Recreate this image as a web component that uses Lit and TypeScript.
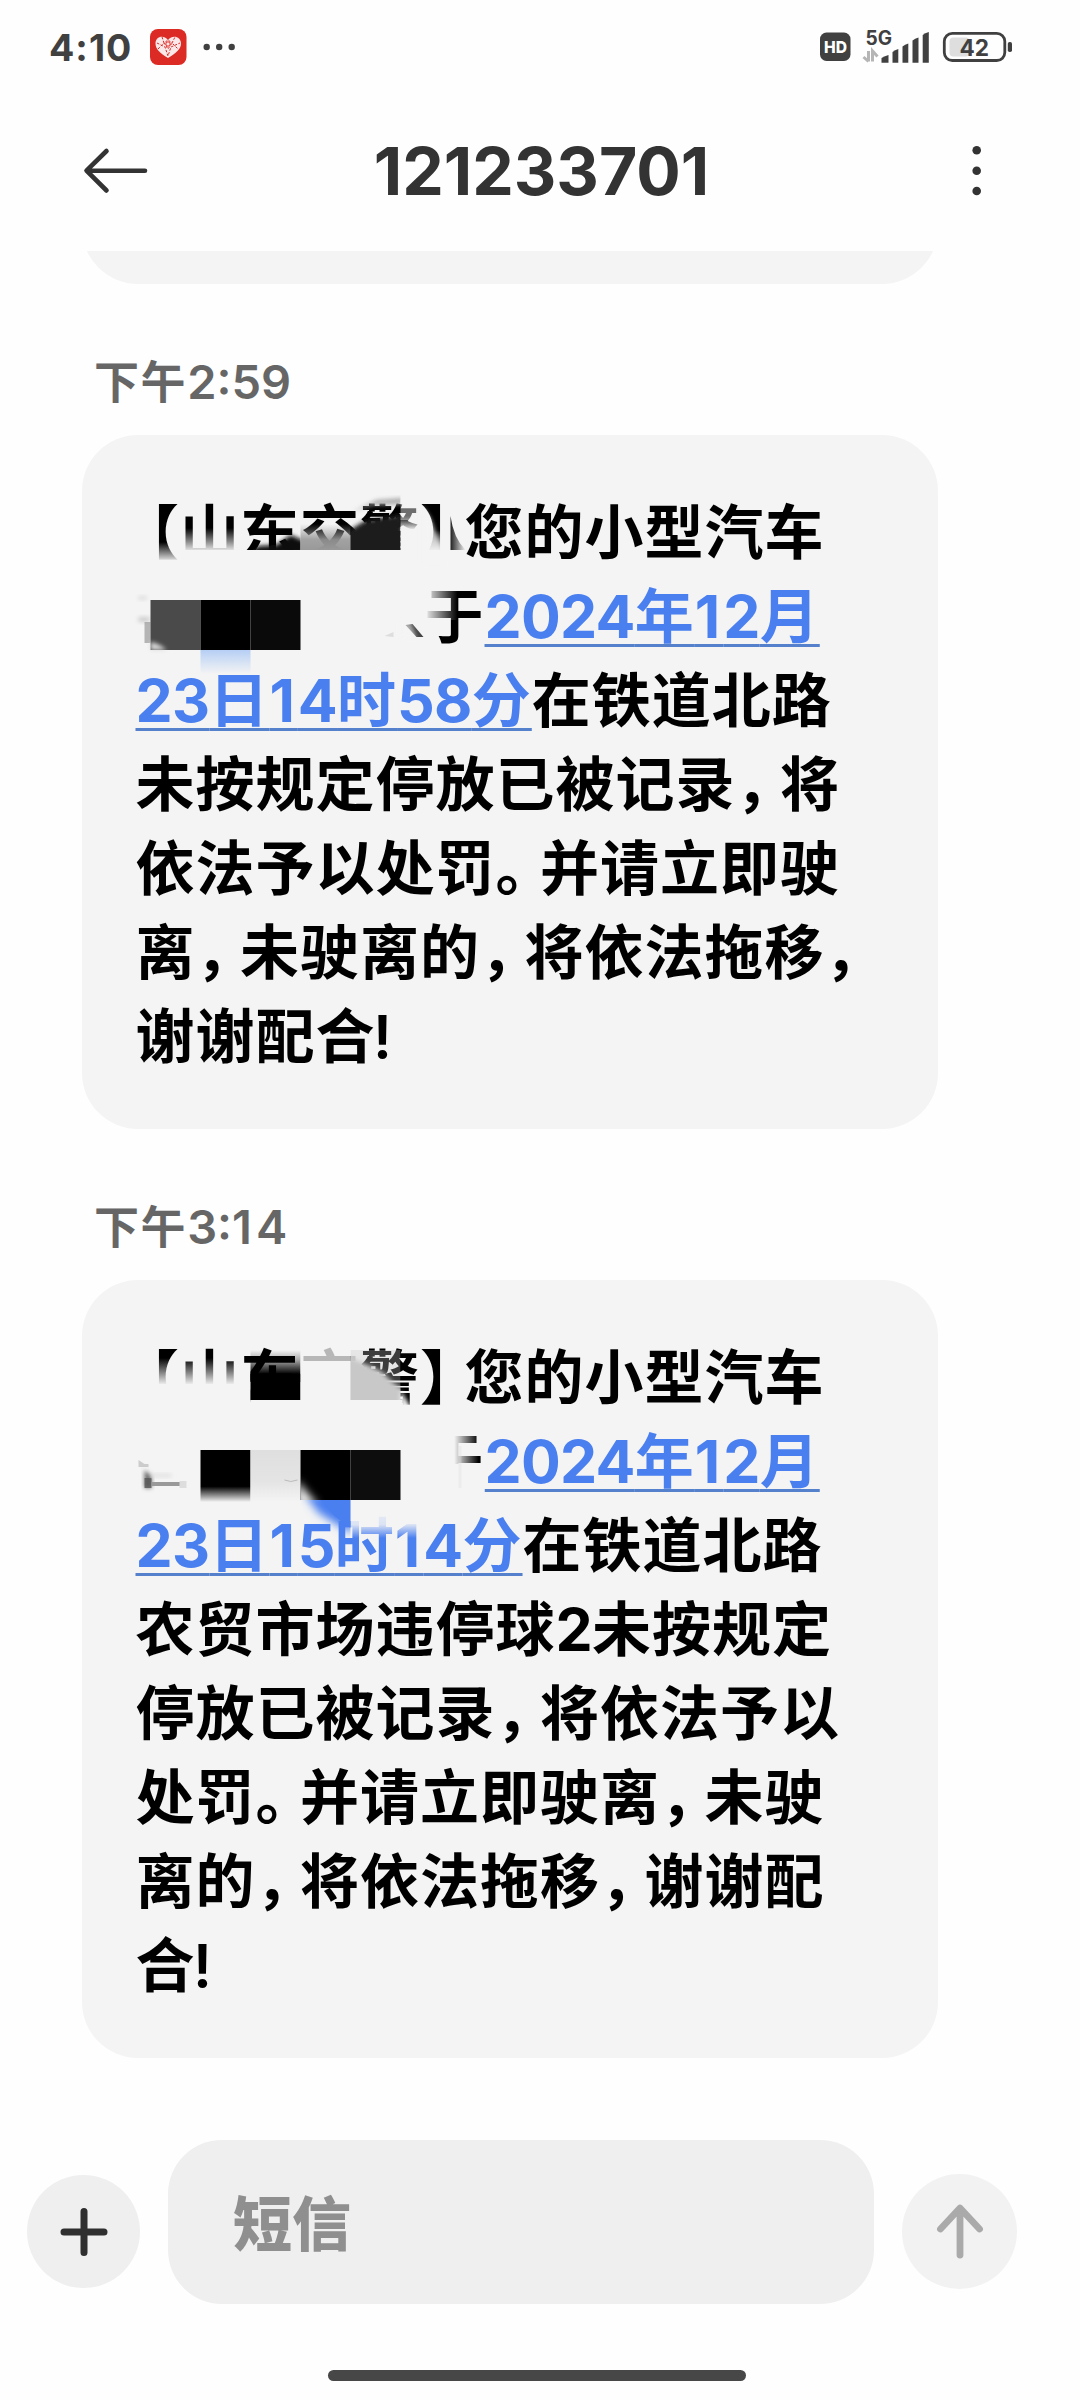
import { LitElement, html, css, svg } from "lit";
import { customElement, property } from "lit/decorators.js";

type Run = { text: string; link?: boolean; gap?: boolean };
type Message = { time: string; lines: Run[][] };

const messages: Message[] = [
  {
    time: "下午2:59",
    lines: [
      [{ text: "【山东交警】您的小型汽车" }],
      [{ text: "", gap: true }, { text: "于" }, { text: "2024年12月", link: true }],
      [{ text: "23日14时58分", link: true }, { text: "在铁道北路" }],
      [{ text: "未按规定停放已被记录，将" }],
      [{ text: "依法予以处罚。并请立即驶" }],
      [{ text: "离，未驶离的，将依法拖移，" }],
      [{ text: "谢谢配合!" }],
    ],
  },
  {
    time: "下午3:14",
    lines: [
      [{ text: "【山东交警】您的小型汽车" }],
      [{ text: "", gap: true }, { text: "于" }, { text: "2024年12月", link: true }],
      [{ text: "23日15时14分", link: true }, { text: "在铁道北路" }],
      [{ text: "农贸市场违停球2未按规定" }],
      [{ text: "停放已被记录，将依法予以" }],
      [{ text: "处罚。并请立即驶离，未驶" }],
      [{ text: "离的，将依法拖移，谢谢配" }],
      [{ text: "合!" }],
    ],
  },
];

/* Wraps punctuation and digits so that each gets its own advance. */
const pieces = (text: string) =>
  text.split(/([，。【】]|1|[02-9]+|!)/).filter(Boolean).map((p) => {
    if (p === "【") return html`<span class="open">${p}</span>`;
    if (/[，。】]/.test(p)) return html`<span class="close">${p}</span>`;
    if (p === "!") return html`<span class="bang">${p}</span>`;
    if (p === "1") return html`<span class="num one">${p}</span>`;
    if (/[0-9]/.test(p)) return html`<span class="num">${p}</span>`;
    return p;
  });

const BG = "#f4f4f4";

const firstMask = svg`
  <defs>
    <filter id="s2" x="-50%" y="-50%" width="200%" height="200%"><feGaussianBlur stdDeviation="2"/></filter>
    <linearGradient id="down" x1="0" y1="0" x2="0" y2="1"><stop offset="0" stop-color=${BG} stop-opacity="0"/><stop offset="1" stop-color=${BG}/></linearGradient>
    <linearGradient id="leftFade" x1="0" y1="0" x2="1" y2="0"><stop offset="0" stop-color=${BG}/><stop offset="1" stop-color=${BG} stop-opacity="0"/></linearGradient>
    <linearGradient id="grayDown" x1="0" y1="0" x2="0" y2="1"><stop offset="0" stop-color="#999" stop-opacity="0"/><stop offset=".6" stop-color="#999" stop-opacity=".9"/><stop offset="1" stop-color="#999"/></linearGradient>
    <linearGradient id="blueDown" x1="0" y1="0" x2="0" y2="1"><stop offset="0" stop-color="#b6cff5"/><stop offset="1" stop-color=${BG}/></linearGradient>
    <linearGradient id="shard" x1="0" y1="0" x2="1" y2="0"><stop offset="0" stop-color="#222"/><stop offset="1" stop-color=${BG}/></linearGradient>
    <clipPath id="c1"><rect x="250" y="504" width="50" height="46"/></clipPath>
    <clipPath id="c3"><rect x="350" y="495" width="50" height="55"/></clipPath>
  </defs>
  <rect x="150" y="542" width="32" height="20" fill="url(#down)"/>
  <rect x="182" y="528" width="58" height="24" fill="url(#down)"/>
  <rect x="182" y="550" width="225" height="15" fill=${BG}/>
  <g clip-path="url(#c1)"><path d="M245 554L258 546 276 545 290 535 304 541V554Z" fill="#0a0a0a" filter="url(#s2)"/></g>
  <rect x="300" y="524" width="50" height="26" fill="url(#grayDown)"/>
  <g clip-path="url(#c3)"><path d="M346 532L364 521 402 514V554H346Z" fill="#1a1a1a" filter="url(#s2)"/><rect x="350" y="532" width="50" height="18" fill="#1c1c1c"/><path d="M352 512L376 500 402 498V504L372 505Z" fill="#aaa" filter="url(#s2)"/></g>
  <rect x="400" y="500" width="21" height="20" fill=${BG} opacity=".45"/>
  <rect x="400" y="516" width="22" height="14" fill="url(#down)"/>
  <rect x="400" y="529" width="26" height="36" fill=${BG}/>
  <path d="M422 506L430 518 440 545 444 565H422Z" fill=${BG} opacity=".7" filter="url(#s2)"/>
  <rect x="424" y="530" width="22" height="22" fill="url(#down)"/>
  <rect x="424" y="550" width="22" height="15" fill=${BG}/>
  <path d="M450 516Q453 538 465 550H450Z" fill="url(#shard)"/>
  <rect x="138" y="596" width="8" height="4" fill="#ddd" filter="url(#s2)"/>
  <rect x="138" y="617" width="11" height="5" fill="#ccc" filter="url(#s2)"/>
  <path d="M144 622H150V643H144Z" fill="#999" opacity=".7"/>
  <rect x="150" y="600" width="50" height="50" fill="#4a4a4a"/>
  <path d="M150 642Q158 643 166 650H150Z" fill="#ddd" filter="url(#s2)"/>
  <rect x="200" y="600" width="50" height="50" fill="#000"/>
  <rect x="250" y="600" width="50" height="50" fill="#0a0a0a"/>
  <rect x="200" y="650" width="50" height="24" fill="url(#blueDown)"/>
  <path d="M405 625L412 624 423 637H416Z" fill="#444"/>
  <path d="M400 622L410 622 416 638H400Z" fill=${BG} opacity=".6" filter="url(#s2)"/>
  <path d="M384 636L393 632V637Z" fill="#ddd"/>
  <rect x="424" y="586" width="33" height="34" fill="url(#leftFade)"/>`;

const secondMask = svg`
  <defs>
    <filter id="t2" x="-50%" y="-50%" width="200%" height="200%"><feGaussianBlur stdDeviation="2"/></filter>
    <filter id="t4" x="-50%" y="-50%" width="200%" height="200%"><feGaussianBlur stdDeviation="4"/></filter>
    <linearGradient id="down2" x1="0" y1="0" x2="0" y2="1"><stop offset="0" stop-color=${BG} stop-opacity="0"/><stop offset="1" stop-color=${BG}/></linearGradient>
    <linearGradient id="left2" x1="0" y1="0" x2="1" y2="0"><stop offset="0" stop-color=${BG}/><stop offset=".55" stop-color=${BG}/><stop offset="1" stop-color=${BG} stop-opacity="0"/></linearGradient>
    <linearGradient id="dark2" x1="0" y1="0" x2="0" y2="1"><stop offset="0" stop-color="#000" stop-opacity="0"/><stop offset=".3" stop-color="#000" stop-opacity=".3"/><stop offset=".75" stop-color="#000"/><stop offset="1" stop-color="#000"/></linearGradient>
    <linearGradient id="block2" x1="0" y1="0" x2="0" y2="1"><stop offset="0" stop-color="#000"/><stop offset=".7" stop-color="#000"/><stop offset="1" stop-color=${BG}/></linearGradient>
    <linearGradient id="light2" x1="0" y1="0" x2="0" y2="1"><stop offset="0" stop-color="#dfdfdf"/><stop offset=".6" stop-color="#e4e4e4"/><stop offset="1" stop-color=${BG}/></linearGradient>
    <linearGradient id="veil2" x1="0" y1="0" x2="0" y2="1"><stop offset="0" stop-color=${BG}/><stop offset=".65" stop-color=${BG} stop-opacity=".85"/><stop offset="1" stop-color=${BG} stop-opacity="0"/></linearGradient>
    <clipPath id="g2"><rect x="350" y="1350" width="50" height="50"/></clipPath>
    <clipPath id="b2"><rect x="300" y="1500" width="50" height="40"/></clipPath>
    <clipPath id="k2"><rect x="300" y="1450" width="50" height="50"/></clipPath>
  </defs>
  <rect x="150" y="1358" width="91" height="27" fill="url(#down2)"/>
  <rect x="150" y="1384" width="100" height="28" fill=${BG}/>
  <rect x="240" y="1366" width="10" height="44" fill=${BG}/>
  <rect x="250" y="1350" width="50" height="32" fill="url(#dark2)"/>
  <rect x="250" y="1374" width="50" height="26" fill="#000"/>
  <rect x="250" y="1400" width="152" height="12" fill=${BG}/>
  <rect x="300" y="1347" width="50" height="14" fill=${BG} opacity=".75"/>
  <rect x="300" y="1361" width="60" height="46" fill=${BG}/>
  <rect x="350" y="1347" width="12" height="16" fill=${BG} opacity=".8"/>
  <g clip-path="url(#g2)"><rect x="350" y="1350" width="50" height="50" fill="#c8c8c8" opacity=".3"/><path d="M345 1356L370 1366 382 1372 392 1382 404 1390V1406H345Z" fill="#c8c8c8" filter="url(#t2)"/></g>
  <path d="M400 1390L406 1400 412 1410H400Z" fill=${BG} filter="url(#t2)"/>
  <path d="M138 1460L144 1464H148V1467H138Z" fill="#ccc"/>
  <path d="M144 1470L151 1476V1488H144Z" fill="#666" filter="url(#t2)"/>
  <path d="M144 1478H151V1488H144Z" fill="#555" opacity=".8"/>
  <rect x="151" y="1482" width="30" height="4" fill="#999"/>
  <rect x="151" y="1474" width="20" height="3" fill="#ddd" filter="url(#t2)"/>
  <rect x="179" y="1481" width="7" height="7" fill="#ddd"/>
  <rect x="200" y="1450" width="50" height="52" fill="url(#block2)"/>
  <rect x="250" y="1450" width="50" height="52" fill="url(#light2)"/>
  <path d="M284 1480Q290 1483 297 1480" fill="none" stroke="#bbb" stroke-width="1"/>
  <rect x="350" y="1450" width="50" height="50" fill="#0d0d0d"/>
  <rect x="300" y="1450" width="50" height="50" fill="#000"/>
  <g clip-path="url(#k2)"><path d="M296 1480L318 1506H296Z" fill=${BG} filter="url(#t4)"/></g>
  <rect x="350" y="1500" width="84" height="38" fill="url(#veil2)"/>
  <g clip-path="url(#b2)"><path d="M304 1494L318 1513 334 1523 352 1534V1494Z" fill="#4a7ff0" filter="url(#t4)"/><path d="M318 1498H350V1528L334 1516Z" fill="#4a7ff0"/></g>
  <rect x="424" y="1430" width="54" height="34" fill="url(#left2)"/>
  <rect x="424" y="1464" width="60" height="36" fill=${BG}/>
  <rect x="458" y="1446" width="3" height="42" fill="#ddd" opacity=".35"/>`;

@customElement("sms-message")
class SmsMessage extends LitElement {
  @property({ attribute: false }) message!: Message;
  @property({ type: Number }) index = 0;

  static styles = css`
    :host { display: block; }
    .time {
      height: 60px; font-size: 45px; line-height: 60px; font-weight: 600; color: #666;
      padding-left: 12.5px; letter-spacing: 1.6px; white-space: pre;
    }
    .time-num { font-size: 47px; letter-spacing: 0; }
    .time-num .one { letter-spacing: 4px; }
    .bubble {
      position: relative; box-sizing: border-box; width: 856px; margin-top: 23px;
      padding: 55.5px 0 50.5px 54px; border-radius: 56px; background: #f4f4f4;
      color: #000; font-size: 59px; line-height: 84px; font-weight: 700; letter-spacing: 1px;
      text-spacing-trim: space-all;
    }
    .line { height: 84px; white-space: nowrap; }
    .open { margin-left: -15.5px; }
    .close { letter-spacing: -14.5px; }
    .bubble .num { font-size: 59px; letter-spacing: -0.7px; }
    .bubble .one { letter-spacing: 3px; }
    .bang { margin-left: -2.5px; font-weight: 600; }
    .gap { display: inline-block; width: 289px; }
    .link {
      color: #4a7ff0; text-decoration: underline; text-decoration-color: #5580cc;
      text-decoration-thickness: 3px; text-underline-offset: 5.5px; text-decoration-skip-ink: none;
    }
    .mask { position: absolute; left: 0; top: 0; display: block; }
  `;

  render() {
    const second = this.index === 1;
    const [, label, clock] = this.message.time.match(/^(\D+)(.*)$/)!;
    return html`
      <div class="time">${label}<span class="time-num">${pieces(clock)}</span></div>
      <div class="bubble">
        ${this.message.lines.map((line) => html`<div class="line">${line.map((r) =>
          r.gap ? html`<span class="gap"></span>`
          : r.link ? html`<span class="link">${pieces(r.text)}</span>`
          : pieces(r.text))}</div>`)}
        ${second
          ? html`<svg class="mask" width="856" height="300" viewBox="81.5 1280 856 300">${secondMask}</svg>`
          : html`<svg class="mask" width="856" height="300" viewBox="81.5 435 856 300">${firstMask}</svg>`}
      </div>`;
  }
}

@customElement("app-root")
class AppRoot extends LitElement {
  static styles = css`
    :host {
      display: flex; flex-direction: column; box-sizing: border-box; width: 1080px; height: 2400px;
      overflow: hidden; background: #fefefe; color: #333;
      font-family: Inter, "Noto Sans CJK SC", sans-serif;
    }
    svg { display: block; flex: none; }
    .status { height: 94px; display: flex; align-items: center; padding: 0 68px 0 49px; }
    .clock { font-size: 37.5px; font-weight: 700; color: #404040; width: 101px; letter-spacing: 1px; }
    .spacer { flex: 1; }
    .header { height: 157px; display: flex; align-items: center; justify-content: space-between; padding: 0 97px 3px 83px; box-sizing: border-box; }
    .title { font-size: 66px; font-weight: 700; color: #333; margin-right: 37px; }
    .thread { flex: 1; padding-left: 81.5px; overflow: hidden; }
    .previous { height: 33px; width: 856px; overflow: hidden; display: flex; align-items: flex-end; }
    .previous-bubble { flex: none; width: 856px; height: 160px; border-radius: 56px; background: #f4f4f4; }
    .first { margin-top: 68px; }
    .second { margin-top: 68px; }
    .composer { display: flex; align-items: center; height: 164px; padding-left: 27px; }
    .round { flex: none; display: flex; align-items: center; justify-content: center; border-radius: 50%; margin-top: 19px; }
    .add { width: 113px; height: 113px; background: #efefef; }
    .send { width: 115px; height: 115px; background: #f2f2f2; }
    .field {
      box-sizing: border-box; width: 706px; height: 164px; margin: 0 28px; padding-left: 65px;
      border-radius: 54px; background: #efefef; color: #8f8f8f; font-size: 59px; font-weight: 900;
      line-height: 169px;
    }
    .home { height: 96px; display: flex; justify-content: center; align-items: flex-end; padding-bottom: 19px; padding-right: 6px; box-sizing: border-box; }
    .home-bar { width: 418px; height: 11px; border-radius: 6px; background: #474747; }
  `;

  render() {
    return html`
      <div class="status">
        <div class="clock">4:10</div>
        <svg width="90" height="40" viewBox="150 27 90 40">
          <rect x="150" y="29" width="36.5" height="36" rx="8" fill="#dc2a24"/>
          <path d="M168 58C160 53 155.500 49 155.500 43.500C155.500 37 163 34 168 40C173 34 181 37 181 43.500C181 49 176 53 168 58Z" fill="#fbe9ea"/>
          <path d="M157 43L165 47L168 56L171 47L180 43M162 37L164 43L168 40L172 43L175 37M158 49L164 43L168 49L172 43L178 49" fill="none" stroke="#dc2a24" stroke-width="1" stroke-dasharray="2.500 1.500"/>
          <circle cx="168" cy="44" r="2.200" fill="none" stroke="#dc2a24" stroke-width="1"/>
          <g fill="#404040"><circle cx="206.700" cy="47" r="3.200"/><circle cx="219.200" cy="47" r="3.200"/><circle cx="231.700" cy="47" r="3.200"/></g>
        </svg>
        <div class="spacer"></div>
        <svg width="194" height="40" viewBox="818 27 194 40" font-family="Inter, sans-serif" font-weight="700">
          <rect x="820" y="32.500" width="30.500" height="28.500" rx="6.500" fill="#404040"/>
          <text x="824" y="53" font-size="16.500" font-weight="800" fill="#fff" textLength="23" lengthAdjust="spacingAndGlyphs">HD</text>
          <text x="865.500" y="44.700" font-size="19.500" fill="#404040" textLength="26.500" lengthAdjust="spacingAndGlyphs">5G</text>
          <path d="M868.500 51V61.500M863.500 57L868.500 61.500M872.500 61.500V51L877.500 56.500" fill="none" stroke="#b5b5b5" stroke-width="3"/>
          <g fill="#404040">
            <path d="M881.500 62.700V58Q885 56 888.500 55V62.700Z"/>
            <path d="M892.500 62.700V52Q895 50 898.300 49V62.700Z"/>
            <path d="M902.500 62.700V46.500Q905 44.500 908.300 43.500V62.700Z"/>
            <path d="M912.500 62.700V40.500Q915 38.500 918.500 37.500V62.700Z"/>
            <path d="M922.700 62.700V35Q925 33 928.800 32V62.700Z"/>
          </g>
          <rect x="949.500" y="37.500" width="20" height="19" rx="4" fill="#dedede"/>
          <rect x="944.300" y="33.300" width="60.500" height="27.200" rx="8" fill="none" stroke="#404040" stroke-width="2.800"/>
          <rect x="1007.800" y="42" width="4.200" height="10" rx="1.800" fill="#404040"/>
          <text x="959.500" y="55.700" font-size="22.500" fill="#404040" textLength="29.500" lengthAdjust="spacingAndGlyphs">42</text>
        </svg>
      </div>
      <div class="header">
        <svg width="66" height="50" viewBox="83 146 66 50">
          <path d="M145 170.700H87M106.500 151L86.500 170.700L106.500 190.500" fill="none" stroke="#333" stroke-width="4.600" stroke-linecap="round" stroke-linejoin="round"/>
        </svg>
        <div class="title">121233701</div>
        <svg width="12" height="52" viewBox="971 145 12 52" fill="#333">
          <circle cx="976.700" cy="150.300" r="4.300"/><circle cx="976.700" cy="170.700" r="4.300"/><circle cx="976.700" cy="191" r="4.300"/>
        </svg>
      </div>
      <div class="thread">
        <div class="previous"><div class="previous-bubble"></div></div>
        <sms-message class="first" .message=${messages[0]} .index=${0}></sms-message>
        <sms-message class="second" .message=${messages[1]} .index=${1}></sms-message>
      </div>
      <div class="composer">
        <div class="round add">
          <svg width="56" height="56" viewBox="-28 -28 56 56"><path d="M-20 0H20M0 -20.500V20.500" fill="none" stroke="#2f2f2f" stroke-width="7" stroke-linecap="round"/></svg>
        </div>
        <div class="field">短信</div>
        <div class="round send">
          <svg width="60" height="64" viewBox="-30 -31 60 64"><path d="M0 24V-22M-19.500 -2L0 -23L19.500 -2" fill="none" stroke="#aaa" stroke-width="6.800" stroke-linecap="round" stroke-linejoin="round"/></svg>
        </div>
      </div>
      <div class="home"><div class="home-bar"></div></div>
    `;
  }
}
